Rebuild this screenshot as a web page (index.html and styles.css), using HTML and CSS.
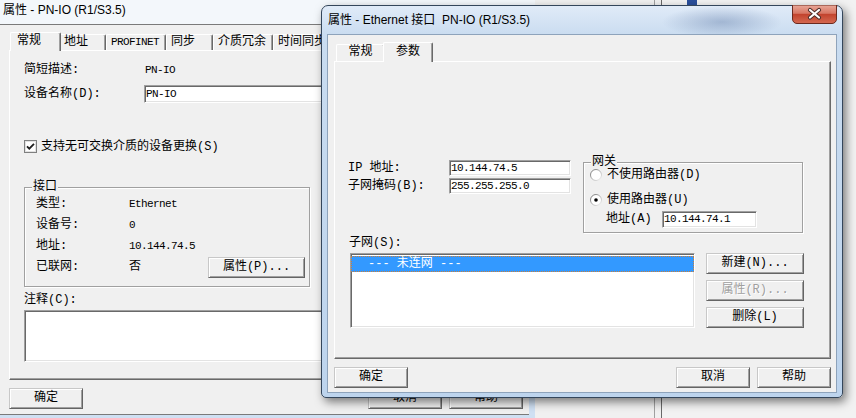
FILE: index.html
```html
<!DOCTYPE html>
<html>
<head>
    <meta charset="UTF-8">
    <title>属性 - Ethernet 接口 PN-IO (R1/S3.5)</title>
    <link rel="stylesheet" href="styles.css">
</head>
<body>
    <!-- window behind both dialogs -->
    <div class="desk-back">
        <div class="desk-pane"></div>
        <div class="desk-split"></div>
        <div class="desk-rest"><span class="desk-icon"></span></div>
    </div>

    <!-- PN-IO properties (inactive) -->
    <div class="dlg dlg-back">
        <div class="caption">属性 - PN-IO (R1/S3.5)</div>
        <div class="client">
            <div class="tabs">
                <span class="tab on">常规</span>
                <span class="tab">地址</span>
                <span class="tab v">PROFINET</span>
                <span class="tab">同步</span>
                <span class="tab">介质冗余</span>
                <span class="tab">时间同步</span>
            </div>
            <div class="page">
                <div class="info-row"><span class="lbl">简短描述:</span><span class="v val">PN-IO</span></div>
                <div class="name-row"><span class="lbl">设备名称(D):</span><span class="field v">PN-IO</span></div>
                <div class="check-row">
                    <svg width="13" height="13" viewBox="0 0 13 13"><rect x="0.5" y="0.5" width="12" height="12" fill="#fff" stroke="#7f8080"/><rect x="1.5" y="1.5" width="10" height="10" fill="none" stroke="#e2e2e2"/><path d="M3 6.3 5.3 8.7 10 3.8" fill="none" stroke="#1e1e1e" stroke-width="1.8"/></svg>
                    <span>支持无可交换介质的设备更换(S)</span>
                </div>
                <div class="group port">
                    <span class="group-label">接口</span>
                    <div class="port-grid">
                        <span>类型:</span><span class="v">Ethernet</span><span></span>
                        <span>设备号:</span><span class="v">0</span><span></span>
                        <span>地址:</span><span class="v">10.144.74.5</span><span></span>
                        <span>已联网:</span><span>否</span><button class="btn">属性(P)...</button>
                    </div>
                </div>
                <div class="memo-label">注释(C):</div>
                <div class="field memo"></div>
            </div>
            <div class="foot">
                <button class="btn">确定</button>
                <span class="fill"></span>
                <button class="btn">取消</button>
                <button class="btn">帮助</button>
            </div>
        </div>
    </div>

    <!-- Ethernet interface properties (active) -->
    <div class="dlg dlg-front">
        <div class="caption">
            <span>属性 - Ethernet 接口  PN-IO (R1/S3.5)</span>
            <svg class="close" width="45" height="19" viewBox="0 0 45 19">
                <defs>
                    <linearGradient id="red" x1="0" y1="0" x2="0" y2="1">
                        <stop offset="0" stop-color="#eaa99a"/>
                        <stop offset="0.45" stop-color="#d77663"/>
                        <stop offset="0.5" stop-color="#c2432d"/>
                        <stop offset="1" stop-color="#d56a52"/>
                    </linearGradient>
                    <linearGradient id="ring" x1="0" y1="0" x2="1" y2="1">
                        <stop offset="0" stop-color="#6f6f6f"/>
                        <stop offset="1" stop-color="#f4f4f4"/>
                    </linearGradient>
                </defs>
                <path d="M0.5 0 H44.5 V14 a4.5 4.5 0 0 1 -4.5 4.5 H5 a4.5 4.5 0 0 1 -4.5 -4.5 Z" fill="url(#red)" stroke="#6b2a1f"/>
                <path d="M18 5 L27 12.5 M27 5 L18 12.5" stroke="#4a2c28" stroke-width="4.2" stroke-linecap="round"/>
                <path d="M18 5 L27 12.5 M27 5 L18 12.5" stroke="#fff" stroke-width="2.2" stroke-linecap="round"/>
            </svg>
        </div>
        <div class="client">
            <div class="tabs r">
                <span class="tab">常规</span>
                <span class="tab on">参数</span>
            </div>
            <div class="page">
                <div class="net">
                    <div class="ipgrid">
                        <span>IP 地址:</span><span class="field v">10.144.74.5</span>
                        <span>子网掩码(B):</span><span class="field v">255.255.255.0</span>
                    </div>
                    <div class="group gw">
                        <span class="group-label">网关</span>
                        <div class="radio-row">
                            <svg width="12" height="12" viewBox="0 0 12 12"><circle cx="6" cy="6" r="5.5" fill="#fff" stroke="url(#ring)"/></svg>
                            <span>不使用路由器(D)</span>
                        </div>
                        <div class="radio-row">
                            <svg width="12" height="12" viewBox="0 0 12 12"><circle cx="6" cy="6" r="5.5" fill="#fff" stroke="url(#ring)"/><circle cx="6" cy="6" r="1.8" fill="#000"/></svg>
                            <span>使用路由器(U)</span>
                        </div>
                        <div class="gw-addr"><span class="lbl">地址(A)</span><span class="field v">10.144.74.1</span></div>
                    </div>
                </div>
                <div class="subnet-label">子网(S):</div>
                <div class="subnet">
                    <div class="field list">
                        <div class="item">--- 未连网 ---</div>
                    </div>
                    <div class="side">
                        <button class="btn">新建(N)...</button>
                        <button class="btn off">属性(R)...</button>
                        <button class="btn">删除(L)</button>
                    </div>
                </div>
            </div>
            <div class="foot">
                <button class="btn">确定</button>
                <span class="fill"></span>
                <button class="btn">取消</button>
                <button class="btn">帮助</button>
            </div>
        </div>
    </div>
</body>
</html>
```
FILE: styles.css
```css
* {
    box-sizing: border-box;
}
body {
    margin: 0;
    width: 856px;
    height: 418px;
    overflow: hidden;
    position: relative;
    background: #fff;
    font-family: "Liberation Mono", "Noto Sans CJK SC", monospace;
    font-size: 12px;
    line-height: 16px;
    color: #000;
}
.v {
    font-size: 11px;
    letter-spacing: -0.6px;
}

/* window behind */
.desk-back {
    position: absolute;
    left: 535px;
    top: 0;
    width: 321px;
    height: 418px;
    display: flex;
}
.desk-pane {
    width: 120px;
    background: #f0f0f0;
    border-right: 1px solid #a0a0a0;
}
.desk-split {
    width: 7px;
    background: #f0f0f0;
    border-right: 1px solid #696969;
}
.desk-rest {
    flex: 1;
    background: #f2f2f2;
    padding-left: 25px;
}
.desk-icon {
    display: block;
    width: 10px;
    height: 5px;
    background: #2a4f9c;
}

/* dialogs */
.dlg {
    position: absolute;
    display: flex;
    flex-direction: column;
}
.caption {
    flex: none;
    font-family: "Liberation Sans", "Noto Sans CJK SC", sans-serif;
    font-size: 12px;
    white-space: pre;
}
.client {
    background: #f0f0f0;
}
.dlg-back {
    left: 0;
    top: 0;
    width: 535px;
    height: 418px;
    background: #cfe0f3;
}
.dlg-back .caption {
    height: 24px;
    line-height: 20px;
    padding-left: 3px;
    background: #f3f7fb;
}
.dlg-back .client {
    width: 529px;
    height: 391px;
    border-top: 1px solid #7a7a7a;
    border-bottom: 1px solid #7a7a7a;
    padding: 7px 6px 0 9px;
}
.dlg-front {
    left: 321px;
    top: 5px;
    width: 522px;
    height: 393px;
    border: 1px solid #34465b;
    border-radius: 7px 7px 5px 5px;
    padding: 0 5px 4px;
    background:
        radial-gradient(60px 16px at 400px 16px, rgba(70, 100, 150, 0.35), transparent),
        linear-gradient(#e0ebf8, #c9dcf0 30px, #bdd4ed);
    box-shadow: 3px 4px 10px rgba(0, 0, 0, 0.5);
}
.dlg-front .caption {
    height: 28px;
    display: flex;
    align-items: center;
    padding-left: 1px;
}
.close {
    margin-left: auto;
    align-self: flex-start;
    margin-top: -1px;
}
.dlg-front .client {
    flex: 1;
    border: 1px solid #8ea3bb;
    padding: 7px 5px 0 6px;
}

/* tabs */
.tabs {
    display: flex;
    align-items: flex-end;
    height: 18px;
    padding-left: 3px;
}
.tab {
    height: 16px;
    min-width: 47px;
    padding: 0 6px 0 4px;
    line-height: 15px;
    white-space: nowrap;
    background: #f0f0f0;
    border: 1px solid #fff;
    border-bottom: 0;
    border-right-color: #696969;
    border-radius: 2px 2px 0 0;
    box-shadow: inset -1px 0 #a0a0a0;
}
.tab.on {
    height: 19px;
    min-width: 51px;
    margin: 0 -2px -1px;
    padding-left: 6px;
    line-height: 17px;
    position: relative;
    z-index: 1;
}
.tabs.r {
    height: 19px;
    padding-left: 2px;
}
.tabs.r .tab {
    min-width: 49px;
    height: 17px;
    padding: 0;
    text-align: center;
}
.tabs.r .tab.on {
    min-width: 50px;
    height: 20px;
    line-height: 18px;
}

.page {
    border: 1px solid;
    border-color: #fff #696969 #696969 #fff;
    box-shadow: inset -1px -1px #a0a0a0;
}

/* controls */
.field {
    display: block;
    background: #fff;
    border: 1px solid;
    border-color: #a0a0a0 #fff #fff #a0a0a0;
    box-shadow: inset 1px 1px #696969, inset -1px -1px #e3e3e3;
    padding-left: 1px;
    white-space: nowrap;
    overflow: hidden;
}
.btn {
    width: 74px;
    height: 21px;
    padding: 0;
    font: inherit;
    line-height: 17px;
    color: #000;
    background: #f0f0f0;
    border: 1px solid;
    border-color: #c8c8c8 #646464 #646464 #c8c8c8;
    box-shadow: inset 1px 1px #fff, inset -1px -1px #a0a0a0;
}
.btn.off {
    color: #a0a0a0;
    text-shadow: 1px 1px #fff;
}
.group {
    position: relative;
    border: 1px solid #a0a0a0;
    box-shadow: inset 1px 1px #fff, 1px 1px #fff;
}
.group-label {
    position: absolute;
    left: 7px;
    top: -7px;
    padding: 0 1px;
    line-height: 12px;
    background: #f0f0f0;
}
.foot {
    display: flex;
    gap: 7px;
    margin-top: 8px;
}
.foot .fill {
    flex: 1;
}

/* PN-IO general page */
.dlg-back .page {
    height: 330px;
    padding: 11px 0 0 14px;
}
.info-row {
    display: flex;
}
.lbl {
    flex: none;
}
.info-row .lbl,
.name-row .lbl {
    width: 120px;
}
.info-row .val {
    padding-left: 1px;
}
.name-row {
    display: flex;
    height: 18px;
    line-height: 18px;
    margin-top: 7px;
}
.name-row .field {
    width: 364px;
    line-height: 16px;
}
.check-row {
    display: flex;
    align-items: center;
    gap: 4px;
    height: 13px;
    margin-top: 37px;
}
.port {
    width: 286px;
    height: 100px;
    margin-top: 34px;
    padding: 6px 0 0 11px;
}
.port-grid {
    display: grid;
    grid-template-columns: 93px 79px 97px;
    grid-auto-rows: 21px;
    line-height: 21px;
}
.port-grid .btn {
    width: 97px;
}
.memo-label {
    margin-top: 5px;
}
.memo {
    width: 484px;
    height: 52px;
    margin-top: 2px;
}

/* Ethernet parameter page */
.dlg-front .page {
    height: 298px;
    padding: 98px 0 0 13px;
}
.net {
    display: flex;
    align-items: flex-start;
}
.ipgrid {
    display: grid;
    grid-template-columns: 101px 122px;
    grid-template-rows: 16px 16px;
    row-gap: 2px;
    line-height: 16px;
}
.ipgrid .field {
    line-height: 14px;
}
.gw {
    width: 220px;
    height: 71px;
    margin: 2px 0 0 12px;
    padding: 5px 0 0 6px;
}
.radio-row {
    display: flex;
    align-items: center;
    gap: 5px;
    height: 14px;
}
.radio-row + .radio-row {
    margin-top: 11px;
}
.gw-addr {
    display: flex;
    height: 17px;
    line-height: 17px;
    margin-top: 4px;
    padding-left: 16px;
}
.gw-addr .lbl {
    width: 56px;
}
.gw-addr .field {
    width: 95px;
    line-height: 15px;
}
.subnet-label {
    margin-top: 3px;
    padding-left: 1px;
    line-height: 14px;
}
.subnet {
    display: flex;
    margin-top: 3px;
    padding-left: 2px;
}
.list {
    width: 345px;
    height: 75px;
    padding: 2px 0 0 0;
}
.item {
    height: 16px;
    line-height: 14px;
    padding-left: 16px;
    white-space: pre;
    color: #fff;
    background: #3399ff;
    border: 1px dotted #c97f3c;
}
.side {
    display: flex;
    flex-direction: column;
    gap: 6px;
    margin-left: 11px;
}
.side .btn {
    width: 98px;
}
```
